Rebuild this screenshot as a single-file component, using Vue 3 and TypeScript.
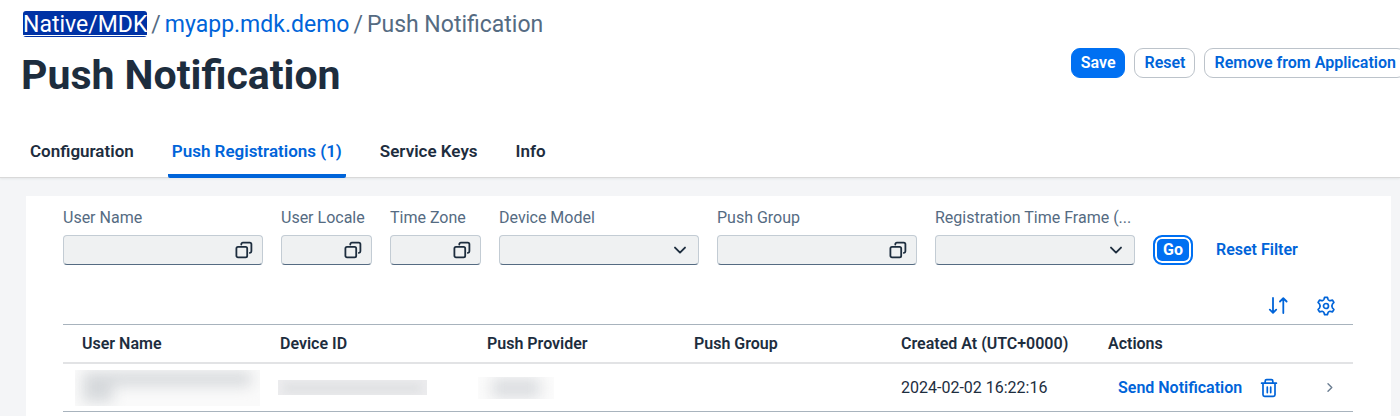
<script setup lang="ts">
import { ref } from 'vue'

type FieldKind = 'help' | 'select'

interface FilterField {
  id: string
  label: string
  kind: FieldKind
  narrow?: boolean
}

const filters: FilterField[] = [
  { id: 'user-name', label: 'User Name', kind: 'help' },
  { id: 'user-locale', label: 'User Locale', kind: 'help', narrow: true },
  { id: 'time-zone', label: 'Time Zone', kind: 'help', narrow: true },
  { id: 'device-model', label: 'Device Model', kind: 'select' },
  { id: 'push-group', label: 'Push Group', kind: 'help' },
  { id: 'time-frame', label: 'Registration Time Frame (...', kind: 'select' },
]

const tabs = ['Configuration', 'Push Registrations (1)', 'Service Keys', 'Info']
const activeTab = ref(tabs[1])

const columns = ['User Name', 'Device ID', 'Push Provider', 'Push Group', 'Created At (UTC+0000)', 'Actions']
</script>

<template>
  <div class="page">
    <header class="header">
      <div class="top">
        <div class="heading">
          <nav class="crumbs" aria-label="Breadcrumb">
            <a class="focused" href="#">Native/MDK</a>
            <span>/</span>
            <a href="#">myapp.mdk.demo</a>
            <span>/</span>
            <span>Push Notification</span>
          </nav>
          <h1>Push Notification</h1>
        </div>
        <div class="actions">
          <button class="btn primary" type="button">Save</button>
          <button class="btn" type="button">Reset</button>
          <button class="btn" type="button">Remove from Application</button>
        </div>
      </div>
      <nav class="tabs" role="tablist">
        <button
          v-for="tab in tabs"
          :key="tab"
          type="button"
          role="tab"
          :aria-selected="tab === activeTab"
          :class="['tab', { active: tab === activeTab }]"
          @click="activeTab = tab"
        >{{ tab }}</button>
      </nav>
    </header>

    <main class="card">
      <form class="filters" @submit.prevent>
        <div v-for="f in filters" :key="f.id" :class="['field', { narrow: f.narrow }]">
          <label :for="f.id">{{ f.label }}</label>
          <div v-if="f.kind === 'help'" class="box">
            <input :id="f.id" type="text" />
            <button class="help" type="button" :aria-label="`Choose ${f.label}`">
              <svg width="18" height="18" viewBox="0 0 18 18" fill="none" stroke="currentColor" stroke-width="1.8" stroke-linecap="round">
                <rect x="1.4" y="5.8" width="10.8" height="10.6" rx="1.6" />
                <path d="M6.3 3.6V3.2a1.6 1.6 0 0 1 1.6-1.6h6.9a1.6 1.6 0 0 1 1.6 1.6v7.1a1.6 1.6 0 0 1-1.5 1.6" />
              </svg>
            </button>
          </div>
          <div v-else class="box pick">
            <select :id="f.id"><option value=""></option></select>
            <svg class="chevron" width="14" height="14" viewBox="0 0 14 14" fill="none" stroke="currentColor" stroke-width="1.9" stroke-linecap="round" stroke-linejoin="round">
              <path d="M2 4.6l5 5 5-5" />
            </svg>
          </div>
        </div>
        <button class="go" type="submit">Go</button>
        <button class="link reset" type="reset">Reset Filter</button>
      </form>

      <div class="toolbar">
        <button class="icon" type="button" aria-label="Sort">
          <svg width="20" height="20" viewBox="0 0 20 20" fill="none" stroke="currentColor" stroke-width="1.8" stroke-linecap="round" stroke-linejoin="round">
            <path d="M5 2v14.6M1.8 13.6L5 16.8l3.2-3.2M15.3 17V2.4M12 5.5l3.3-3.3 3.3 3.3" />
          </svg>
        </button>
        <button class="icon" type="button" aria-label="Settings">
          <svg width="20" height="20" viewBox="0 0 20 20" fill="none" stroke="currentColor" stroke-width="1.7" stroke-linejoin="round">
            <path d="M8.6 1.3h2.8l.6 2q.3.9 1.2 1.2.6.3 1.3.1l2-.5 1.4 2.4-1.4 1.5q-1.3 2 0 4l1.4 1.5-1.4 2.4-2-.5q-.7-.2-1.3.1-.9.3-1.2 1.2l-.6 2H8.6l-.6-2q-.3-.9-1.2-1.2-.6-.3-1.3-.1l-2 .5-1.4-2.4L3.500 12q1.300-2 0-4L2.100 6.500l1.400-2.400 2 .5q.7.2 1.300-.1.900-.3 1.200-1.200z" />
            <circle cx="10" cy="10" r="2.5" />
          </svg>
        </button>
      </div>

      <table>
        <thead>
          <tr>
            <th v-for="c in columns" :key="c" scope="col">{{ c }}</th>
          </tr>
        </thead>
        <tbody>
          <tr>
            <td><div class="redacted user"></div></td>
            <td><div class="redacted device"></div></td>
            <td><div class="redacted provider"></div></td>
            <td></td>
            <td>2024-02-02 16:22:16</td>
            <td>
              <div class="row-actions">
                <button class="link" type="button">Send Notification</button>
                <button class="icon" type="button" aria-label="Delete">
                  <svg width="18" height="20" viewBox="0 0 18 20" fill="none" stroke="currentColor" stroke-width="1.7" stroke-linecap="round" stroke-linejoin="round">
                    <path d="M1.6 5.2h14.8M5.200 5V3a1.400 1.400 0 0 1 1.400-1.400h4.800A1.400 1.400 0 0 1 12.800 3v2M3 5.400v11.400a1.600 1.600 0 0 0 1.600 1.600h8.800a1.600 1.600 0 0 0 1.600-1.600V5.400M7.300 9.200v5.400M10.700 9.200v5.400" />
                  </svg>
                </button>
                <button class="icon next" type="button" aria-label="Open details">
                  <svg width="10" height="12" viewBox="0 0 10 12" fill="none" stroke="currentColor" stroke-width="1.4" stroke-linecap="round" stroke-linejoin="round">
                    <path d="M3 1.700l3.800 3.800L3 9.300" />
                  </svg>
                </button>
              </div>
            </td>
          </tr>
        </tbody>
      </table>
    </main>
  </div>
</template>

<style>
body {
  margin: 0;
  background: #f4f5f7;
}
</style>

<style scoped>
.page {
  display: flex;
  flex-direction: column;
  min-height: 100vh;
  overflow: hidden;
  font-family: Roboto, "Liberation Sans", sans-serif;
  font-size: 16px;
  line-height: 20px;
  color: #1d2d3e;
}
.page *,
.page *::before,
.page *::after {
  box-sizing: border-box;
}
button,
input,
select {
  margin: 0;
  padding: 0;
  border: 0;
  background: none;
  font: inherit;
  color: inherit;
  outline: none;
}
button {
  cursor: pointer;
}
a {
  color: #0064d9;
  text-decoration: none;
}
svg {
  display: block;
}
.header {
  background: #fff;
  border-bottom: 1px solid #d9d9d9;
  box-shadow: 0 1px 2px #e4e6e8;
}
.top {
  display: flex;
  justify-content: space-between;
  padding: 11px 0 0 23px;
}
.crumbs {
  display: flex;
  gap: 4px;
  font-size: 23px;
  line-height: 27px;
  color: #556b82;
}
.crumbs .focused {
  height: 26px;
  border-radius: 3px;
  background: #0032a5;
  color: #fff;
  text-decoration: underline;
  text-decoration-thickness: 1px;
  text-underline-offset: 3px;
}
h1 {
  margin: 13px 0 0 -2px;
  font-size: 41px;
  line-height: 48px;
  font-weight: 700;
}
.actions {
  display: flex;
  flex: none;
  gap: 9px;
  margin-right: -6px;
  padding-top: 37px;
}
.btn {
  height: 30px;
  padding: 0 9px;
  border: 1px solid #bcc3ca;
  border-radius: 9px;
  background: #fff;
  color: #0064d9;
  font-weight: 600;
  white-space: nowrap;
}
.btn.primary {
  border-color: #0070f2;
  background: #0070f2;
  color: #fff;
}
.tabs {
  display: flex;
  gap: 30px;
  padding: 28px 26px 0;
}
.tab {
  height: 51px;
  margin-bottom: -1px;
  padding: 0 4px;
  border-bottom: 4px solid transparent;
  font-size: 17px;
  font-weight: 600;
}
.tab.active {
  border-bottom-color: #0064d9;
  border-radius: 2px;
  color: #0064d9;
}
.card {
  flex: 1;
  margin: 18px 9px 0 26px;
  padding: 12px 38px 4px 37px;
  background: #fff;
}
.filters {
  display: flex;
  align-items: flex-end;
  gap: 18px;
}
.field {
  flex: 0 1 200px;
  min-width: 0;
}
.field.narrow {
  flex-basis: 91px;
}
.field label {
  display: block;
  margin-bottom: 7px;
  color: #556b82;
  white-space: nowrap;
}
.box {
  display: flex;
  align-items: center;
  height: 30px;
  border: 1px solid #c3ccd4;
  border-bottom-color: #556b82;
  border-radius: 4px;
  background: #eff1f2;
}
.box input {
  flex: 1;
  width: 0;
  height: 100%;
  padding-left: 8px;
}
.help {
  padding-right: 9px;
}
.pick {
  display: grid;
}
.pick select,
.pick .chevron {
  grid-area: 1 / 1;
}
.pick select {
  width: 100%;
  height: 100%;
  appearance: none;
}
.pick .chevron {
  justify-self: end;
  margin-right: 11px;
  pointer-events: none;
}
.go {
  width: 40px;
  height: 30px;
  border: 2px solid #0070f2;
  border-radius: 9px;
  background: #0070f2;
  box-shadow: inset 0 0 0 2px #fff;
  color: #fff;
  font-weight: 700;
}
.link {
  color: #0064d9;
  font-weight: 600;
  white-space: nowrap;
}
.reset {
  height: 30px;
  padding-left: 5px;
}
.toolbar {
  display: flex;
  justify-content: flex-end;
  gap: 28px;
  padding: 31px 17px 8px 0;
}
.icon {
  color: #0064d9;
}
table {
  width: 100%;
  table-layout: fixed;
  border-collapse: separate;
  border-spacing: 0;
}
th,
td {
  padding: 0 0 0 10px;
  text-align: left;
  white-space: nowrap;
}
th {
  height: 40px;
  border-top: 1px solid #a8b3bd;
  border-bottom: 2px solid #e2e3e5;
  font-weight: 600;
}
th:first-child {
  padding-left: 19px;
}
th:last-child {
  width: 255px;
}
td {
  height: 48px;
  border-bottom: 1px solid #a8b3bd;
}
td:first-child {
  padding-left: 12px;
}
td:nth-child(2) {
  padding-left: 8px;
}
td:nth-child(3) {
  padding-left: 1px;
}
.redacted {
  overflow: hidden;
}
.redacted::before {
  content: "";
  display: block;
  height: 100%;
}
.user {
  width: 185px;
  height: 36px;
  background: #fafafa;
}
.user::before {
  background:
    linear-gradient(#d6d9dc, #d6d9dc) 8px 2px / 168px 14px no-repeat,
    linear-gradient(#d6d9dc, #d6d9dc) 8px 12px / 30px 20px no-repeat;
  filter: blur(7px);
}
.device {
  width: 149px;
  height: 15px;
  background: #ececee;
}
.device::before {
  background: linear-gradient(#dddfe1, #dddfe1) 6px 4px / 137px 8px no-repeat;
  filter: blur(4px);
}
.provider {
  width: 76px;
  height: 22px;
  background: #fbfbfb;
}
.provider::before {
  background: linear-gradient(#dcdee1, #dcdee1) 14px 1px / 48px 20px no-repeat;
  filter: blur(7px);
}
.row-actions {
  display: flex;
  align-items: center;
  gap: 18px;
  padding: 0 18px 0 10px;
}
.next {
  margin-left: auto;
  color: #6a7d91;
}
</style>
